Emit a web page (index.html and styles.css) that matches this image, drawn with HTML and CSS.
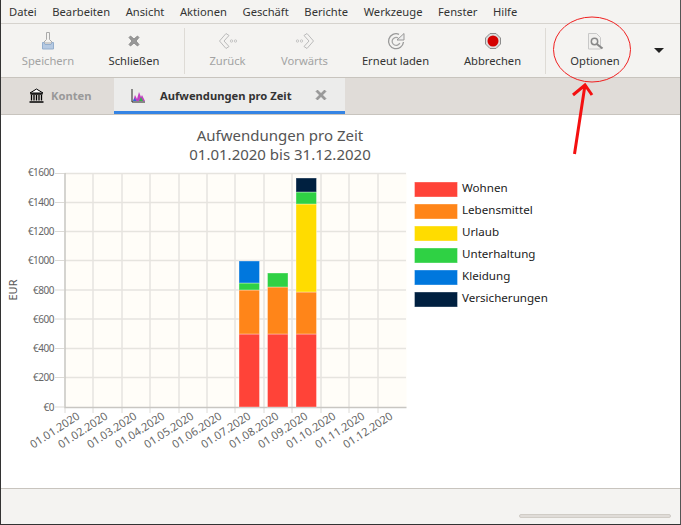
FILE: index.html
```html
<!DOCTYPE html>
<html lang="de">
<head>
  <meta charset="UTF-8">
  <title>Aufwendungen pro Zeit</title>
  <link rel="stylesheet" href="styles.css">
</head>
<body>
  <div class="window">
    <nav class="menubar">
      <span>Datei</span><span>Bearbeiten</span><span>Ansicht</span><span>Aktionen</span><span>Geschäft</span><span>Berichte</span><span>Werkzeuge</span><span>Fenster</span><span>Hilfe</span>
    </nav>

    <div class="toolbar">
      <div class="tool off w-86">
        <svg width="24" height="24" viewBox="0 0 24 24"><path d="M10.500 3.500h3v7l2.500 2.500v1H8v-1l2.500-2.500z" fill="#f4f3f1" stroke="#aaa"/><path d="M6.500 13.500h1.500l1 2h6l1-2h1.500v6.500h-11z" fill="#b5c9e2" stroke="#94aecd"/></svg>
        <span>Speichern</span>
      </div>
      <div class="tool w-86">
        <svg width="24" height="24" viewBox="0 0 24 24"><path d="M7 8.500L8.500 7 12 10 15.500 7 17 8.500 14 12l3 3.500L15.500 17 12 14l-3.500 3L7 15.500 10 12z" fill="#999" stroke="#808080" stroke-width=".8"/></svg>
        <span>Schließen</span>
      </div>
      <i class="sep first"></i>
      <div class="tool off w-77">
        <svg width="24" height="24" viewBox="0 0 24 24"><path d="M10 4.500L3.500 12l6.500 7.500 3-2L8 12l5-5.500z" fill="none" stroke="#bbb"/><circle cx="15.500" cy="12" r="1.200" fill="none" stroke="#bbb" stroke-width=".8"/><circle cx="19.500" cy="12" r="1.200" fill="none" stroke="#bbb" stroke-width=".8"/></svg>
        <span>Zurück</span>
      </div>
      <div class="tool off w-77">
        <svg width="24" height="24" viewBox="0 0 24 24"><path d="M14 4.500l6.500 7.500-6.500 7.500-3-2 5-5.500-5-5.500z" fill="none" stroke="#bbb"/><circle cx="8.500" cy="12" r="1.200" fill="none" stroke="#bbb" stroke-width=".8"/><circle cx="4.500" cy="12" r="1.200" fill="none" stroke="#bbb" stroke-width=".8"/></svg>
        <span>Vorwärts</span>
      </div>
      <div class="tool w-105">
        <svg width="24" height="24" viewBox="0 0 24 24"><path d="M15 5.300A7.500 7.500 0 1 0 19.500 13" fill="none" stroke="#999" stroke-width="1.300"/><path d="M14 8.800A4 4 0 1 0 15.800 14" fill="none" stroke="#a5a5a5" stroke-width="1.300"/><path d="M13 11h7V4.500z" fill="#eee" stroke="#999"/></svg>
        <span>Erneut laden</span>
      </div>
      <div class="tool w-89">
        <svg width="24" height="24" viewBox="0 0 24 24"><path d="M9 4.500h6l4.500 4.500v6L15 19.500H9L4.500 15V9z" fill="#ddd" stroke="#8c8c8c"/><circle cx="12" cy="12" r="5.500" fill="#d40000"/></svg>
        <span>Abbrechen</span>
      </div>
      <i class="sep second"></i>
      <div class="tool w-92">
        <svg width="24" height="24" viewBox="0 0 24 24"><path d="M5.500 4.500h8l4 4v11.500h-12z" fill="#f1f0ee" stroke="#c8c8c8"/><circle cx="11.500" cy="12.500" r="3.200" fill="none" stroke="#888" stroke-width="1.500"/><path d="M13.800 15l5.700 4.500" stroke="#888" stroke-width="2.200"/></svg>
        <span>Optionen</span>
      </div>
      <i class="caret"></i>
    </div>

    <div class="tabs">
      <div class="tab">
        <svg width="15" height="15" viewBox="0 0 15 15"><path d="M7.500 1L14 5H1z" fill="#fff" stroke="#000"/><path d="M1.500 6h12M.500 14h14" stroke="#000" stroke-width="1.600"/><path d="M2.500 7v5.500M5 7v5.500M7.500 7v5.500M10 7v5.500M12.500 7v5.500" stroke="#000" stroke-width="1.300"/></svg>
        <span>Konten</span>
      </div>
      <div class="tab active">
        <svg width="15" height="15" viewBox="0 0 15 15"><path d="M2 13l2-6 2 4 2-7 2 5 1-2 3 6z" fill="#c33fc3"/><path d="M2 13l1.500-3 2 3z" fill="#2a6fd6"/><path d="M8 13l2-4 2 4z" fill="#36b24a"/><path d="M1 1v13h13" fill="none" stroke="#222"/></svg>
        <span>Aufwendungen pro Zeit</span>
        <svg class="tab-close" width="14" height="14" viewBox="0 0 14 14"><path d="M2 3.500L3.500 2 7 5.500 10.500 2 12 3.500 8.500 7 12 10.500 10.500 12 7 8.500 3.500 12 2 10.500 5.500 7z" fill="#999" stroke="#888" stroke-width=".6"/></svg>
      </div>
    </div>

    <main class="content">
      <svg class="chart" width="679" height="373" viewBox="1 115 679 373">
        <text class="title" x="280" y="140.500">Aufwendungen pro Zeit</text>
        <text class="title" x="280" y="159.500">01.01.2020 bis 31.12.2020</text>

        <rect x="64.500" y="173" width="342" height="234" fill="#fffdf8"/>
        <g class="grid">
          <path d="M64.500 173.500H406M64.500 202.500H406M64.500 231.500H406M64.500 260.500H406M64.500 290H406M64.500 319H406M64.500 348.500H406M64.500 377.500H406"/>
          <path d="M93 173V407M122 173V407M150 173V407M179 173V407M207 173V407M235 173V407M264 173V407M292 173V407M321 173V407M349 173V407M378 173V407"/>
        </g>
        <g class="ticks">
          <path d="M55 173.500H64M55 202.500H64M55 231.500H64M55 260.500H64M55 290H64M55 319H64M55 348.500H64M55 377.500H64M55 407H64"/>
          <path d="M65 407V413M93 407V413M122 407V413M150 407V413M179 407V413M207 407V413M235 407V413M264 407V413M292 407V413M321 407V413M349 407V413M378 407V413"/>
        </g>
        <path class="axis" d="M65 173V407.500H406.500"/>

        <g class="bars">
          <rect x="239" y="334" width="20.500" height="73" fill="#ff4338"/>
          <rect x="239" y="290" width="20.500" height="44" fill="#ff8519"/>
          <rect x="239" y="283" width="20.500" height="7" fill="#2fd144"/>
          <rect x="239" y="261" width="20.500" height="22" fill="#0077dd"/>

          <rect x="267.500" y="334" width="20.500" height="73" fill="#ff4338"/>
          <rect x="267.500" y="287" width="20.500" height="47" fill="#ff8519"/>
          <rect x="267.500" y="273" width="20.500" height="14" fill="#2fd144"/>

          <rect x="296" y="334" width="20.500" height="73" fill="#ff4338"/>
          <rect x="296" y="292" width="20.500" height="42" fill="#ff8519"/>
          <rect x="296" y="204" width="20.500" height="88" fill="#ffdc00"/>
          <rect x="296" y="192" width="20.500" height="12" fill="#2fd144"/>
          <rect x="296" y="178" width="20.500" height="14" fill="#002040"/>
        </g>

        <g class="ylabels">
          <text x="54" y="176">€1600</text>
          <text x="54" y="206">€1400</text>
          <text x="54" y="235">€1200</text>
          <text x="54" y="264">€1000</text>
          <text x="54" y="294">€800</text>
          <text x="54" y="323">€600</text>
          <text x="54" y="352">€400</text>
          <text x="54" y="381">€200</text>
          <text x="54" y="411">€0</text>
        </g>
        <text class="ytitle" transform="translate(17 290) rotate(-90)">EUR</text>

        <g class="xlabels">
          <text transform="translate(80.500 418) rotate(-33)">01.01.2020</text>
          <text transform="translate(108.500 418) rotate(-33)">01.02.2020</text>
          <text transform="translate(137.500 418) rotate(-33)">01.03.2020</text>
          <text transform="translate(165.500 418) rotate(-33)">01.04.2020</text>
          <text transform="translate(194.500 418) rotate(-33)">01.05.2020</text>
          <text transform="translate(222.500 418) rotate(-33)">01.06.2020</text>
          <text transform="translate(251.500 418) rotate(-33)">01.07.2020</text>
          <text transform="translate(279.500 418) rotate(-33)">01.08.2020</text>
          <text transform="translate(308.500 418) rotate(-33)">01.09.2020</text>
          <text transform="translate(336.500 418) rotate(-33)">01.10.2020</text>
          <text transform="translate(365.500 418) rotate(-33)">01.11.2020</text>
          <text transform="translate(393.500 418) rotate(-33)">01.12.2020</text>
        </g>

        <g class="legend">
          <rect x="414.500" y="182" width="43" height="15" fill="#ff4338"/><text x="462" y="192">Wohnen</text>
          <rect x="414.500" y="204" width="43" height="15" fill="#ff8519"/><text x="462" y="214">Lebensmittel</text>
          <rect x="414.500" y="226" width="43" height="15" fill="#ffdc00"/><text x="462" y="236">Urlaub</text>
          <rect x="414.500" y="248" width="43" height="15" fill="#2fd144"/><text x="462" y="258">Unterhaltung</text>
          <rect x="414.500" y="270" width="43" height="15" fill="#0077dd"/><text x="462" y="280">Kleidung</text>
          <rect x="414.500" y="292" width="43" height="15" fill="#002040"/><text x="462" y="302">Versicherungen</text>
        </g>
      </svg>
    </main>

    <footer class="statusbar">
      <div class="progress"></div>
    </footer>

    <svg class="annotation" width="681" height="525" viewBox="0 0 681 525">
      <ellipse cx="592" cy="49.500" rx="38.500" ry="32.500" fill="none" stroke="#f02020" stroke-width="1"/>
      <path d="M574.500 154L585 85M573 95L585 85L592 95" fill="none" stroke="#f41010" stroke-width="3"/>
    </svg>
  </div>
</body>
</html>
```

FILE: styles.css
```css
html, body { margin: 0; padding: 0; }
body { font-family: "Noto Sans", sans-serif; font-size: 11.2px; color: #333; background: #fff; }

.window {
  position: relative;
  width: 681px;
  height: 525px;
  box-sizing: border-box;
  display: flex;
  flex-direction: column;
  border-left: 1px solid #333;
  border-right: 1px solid #555;
  border-bottom: 1px solid #333;
  overflow: hidden;
}

.menubar {
  height: 23px;
  flex: none;
  display: flex;
  align-items: center;
  gap: 15.6px;
  padding-left: 8px;
  background: #f4f3f1;
  border-bottom: 1px solid #d6d3ce;
}

.toolbar {
  height: 53px;
  flex: none;
  display: flex;
  align-items: center;
  padding-left: 4px;
  background: #f4f3f1;
  border-bottom: 1px solid #c8c4be;
}
.tool { display: flex; flex-direction: column; align-items: center; flex: none; padding-bottom: 4px; line-height: 16px; color: #333; }
.tool svg { display: block; }
.tool.off { color: #a3a3a3; }
.w-77 { width: 77px; }
.w-86 { width: 86px; }
.w-89 { width: 89px; }
.w-92 { width: 92px; }
.w-105 { width: 105px; }
.sep { flex: none; width: 1px; height: 46px; background: #dedbd6; }
.sep.first { margin: 0 4px 0 7px; }
.sep.second { margin: 0 3px 0 8px; }
.caret {
  flex: none;
  margin-left: 13px;
  width: 0;
  height: 0;
  border-left: 5px solid transparent;
  border-right: 5px solid transparent;
  border-top: 5px solid #222;
}

.tabs {
  height: 36px;
  flex: none;
  display: flex;
  background: #e0dcd8;
  border-bottom: 1px solid #c8c4be;
}
.tab {
  display: flex;
  align-items: center;
  gap: 7px;
  padding-left: 28px;
  padding-bottom: 2px;
  width: 113px;
  box-sizing: border-box;
  font-weight: 700;
  color: #999;
}
.tab.active {
  width: 231px;
  padding-left: 17px;
  gap: 14px;
  background: #ececeb;
  color: #333;
  box-shadow: inset 0 -3px 0 #3584e4;
}
.tab-close { margin-left: 8px; }

.content { flex: 1; background: #fff; min-height: 0; }
.chart { display: block; }

.title { font-size: 15px; fill: #555; text-anchor: middle; }
.grid path { fill: none; stroke: #e6e4df; stroke-width: 1.500; }
.ticks path { fill: none; stroke: #dcdad6; stroke-width: 1; }
.axis { fill: none; stroke: #c8c6c2; stroke-width: 1.500; }
.bars rect { stroke: #fff; stroke-opacity: .35; stroke-width: 1; }
.ylabels text { font-size: 10px; letter-spacing: -.5px; fill: #666; text-anchor: end; }
.ytitle { font-size: 11px; fill: #555; text-anchor: middle; }
.xlabels text { font-size: 11px; fill: #666; text-anchor: end; }
.legend rect { stroke: #fff; stroke-opacity: .35; stroke-width: 1; }
.legend text { font-size: 11.600px; fill: #222; }

.statusbar {
  height: 36px;
  flex: none;
  display: flex;
  align-items: flex-end;
  justify-content: flex-end;
  box-sizing: border-box;
  padding: 0 9px 6px 0;
  background: #f4f3f1;
  border-top: 1px solid #c8c4be;
}
.progress { width: 152px; height: 4px; box-sizing: border-box; background: #e0dcd8; border: 1px solid #d0ccc6; border-radius: 2px; }

.annotation { position: absolute; left: -1px; top: 0; pointer-events: none; }
```
